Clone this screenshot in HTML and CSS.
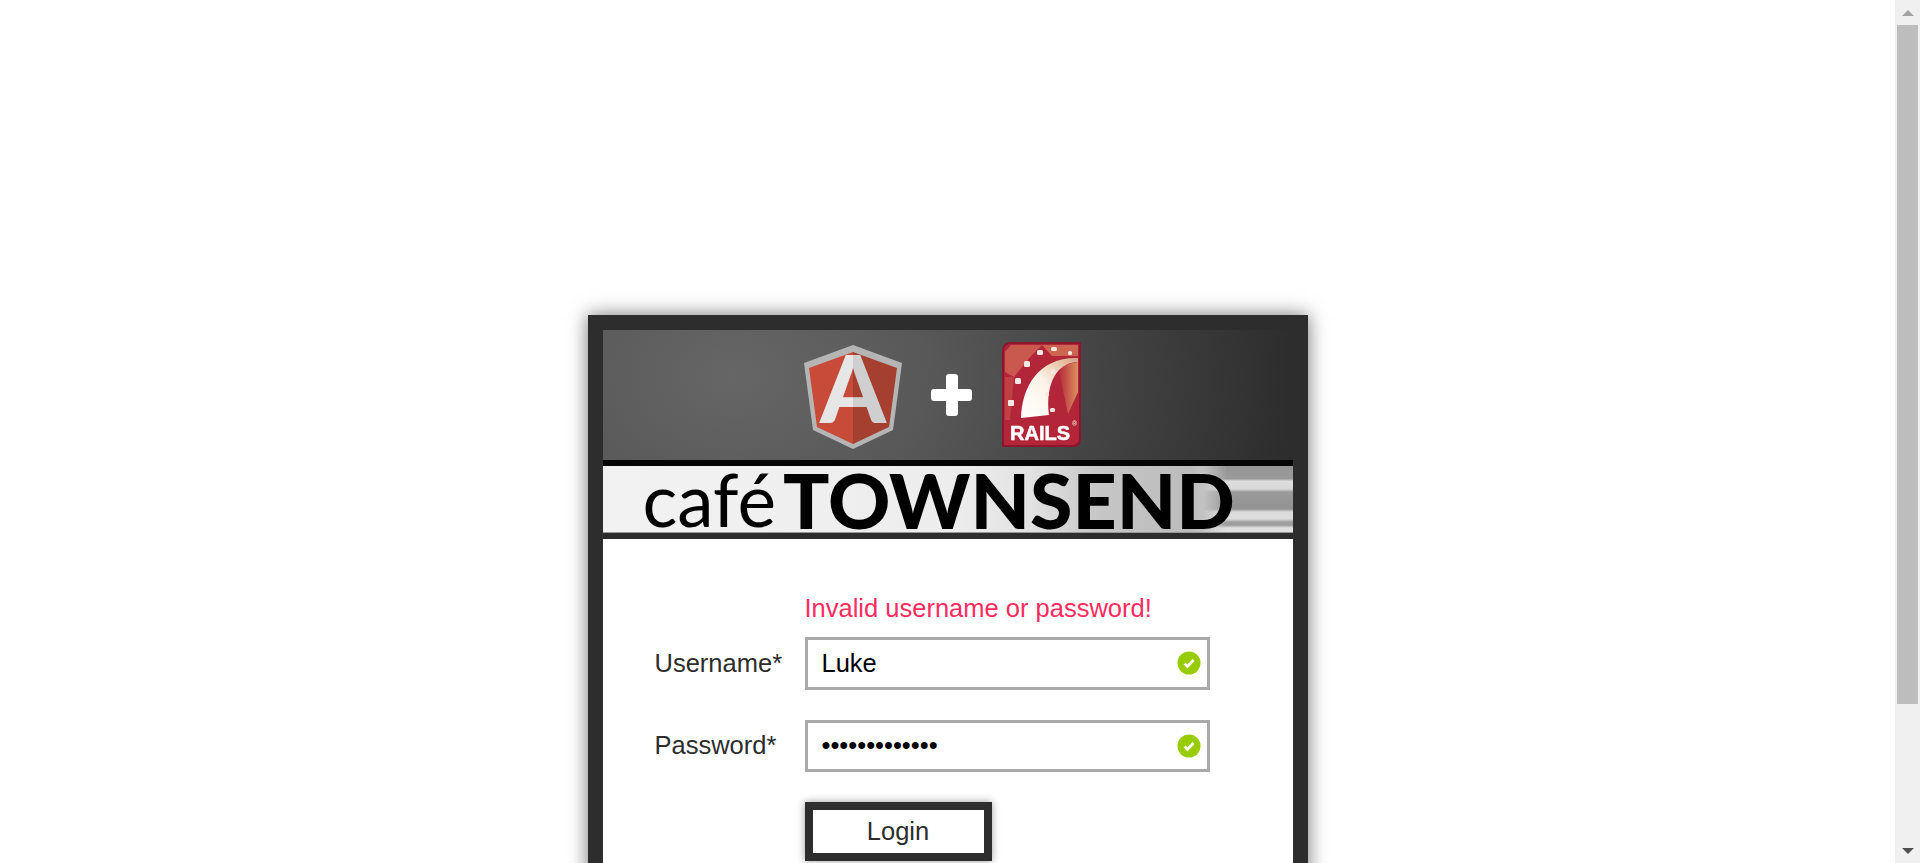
FILE: index.html
```html
<!DOCTYPE html>
<html lang="en">
<head>
<meta charset="utf-8">
<title>café Townsend</title>
<link rel="stylesheet" href="styles.css">
</head>
<body>
<div class="page">
  <main class="viewport">
    <section class="panel">
      <header class="hero">
        <div class="logos">
          <svg class="logo-angular" viewBox="0 0 98 104" aria-hidden="true">
            <defs>
              <linearGradient id="aFill" x1="0" x2="1" y1="0" y2="0">
                <stop offset="0.5" stop-color="#e6e6e6"/><stop offset="0.5" stop-color="#cfcfcf"/>
              </linearGradient>
            </defs>
            <polygon points="49,0 98,18 89,85 49,104 9,85 0,18" fill="#b5b5b5"/>
            <polygon points="49,7 49,99 13,82 5,23" fill="#c84a38"/>
            <polygon points="49,7 93,23 85,82 49,99" fill="#a53f30"/>
            <text class="angular-a" x="49" y="78" text-anchor="middle" fill="url(#aFill)">A</text>
          </svg>
          <svg class="logo-plus" viewBox="0 0 41 42" aria-hidden="true">
            <rect x="0" y="15" width="41" height="12" rx="3" fill="#fff"/>
            <rect x="15" y="0" width="12" height="42" rx="3" fill="#fff"/>
          </svg>
          <svg class="logo-rails" viewBox="0 0 79 105" aria-hidden="true">
            <defs>
              <linearGradient id="arc" x1="0" x2="1" y1="1" y2="0">
                <stop offset="0" stop-color="#fff"/><stop offset="0.5" stop-color="#fdf3e8"/><stop offset="0.85" stop-color="#e7bd9c"/><stop offset="1" stop-color="#cfa58c"/>
              </linearGradient>
              <linearGradient id="wedge" x1="0" x2="1" y1="0" y2="0">
                <stop offset="0" stop-color="#b3263a"/><stop offset="1" stop-color="#dc8f5e"/>
              </linearGradient>
            </defs>
            <path d="M9 0H79V97Q79 105 71 105H0V9Q0 0 9 0Z" fill="#8f1631"/>
            <path d="M9 2H77V96Q77 103 70 103H2V10Q2 2 9 2Z" fill="#b3263a"/>
            <polygon points="9,3 40,3 28,15 12,35 3,30 3,10" fill="#c9584e"/>
            <polygon points="40,3 76,3 76,14 50,14" fill="#cc654f"/>
            <polygon points="3,35 12,35 8,78 3,78" fill="#bf4044"/>
            <polygon points="56,24 76,20 76,50 66,72" fill="url(#wedge)"/>
            <path d="M19 76C20 44 37 15 76 16L76 20C56 20 43 40 47 73Z" fill="url(#arc)"/>
            <g fill="#f8e8e2">
              <rect x="35" y="8" width="6" height="5" rx="1.5"/><rect x="49" y="5" width="6" height="4" rx="1.5"/><rect x="66" y="9" width="4" height="4" rx="1.5"/>
              <rect x="22" y="19" width="6" height="6" rx="1.5"/><rect x="13" y="36" width="6" height="6" rx="1.5"/><rect x="6" y="58" width="6" height="6" rx="1"/>
              <rect x="49" y="27" width="4" height="5" rx="1.5"/><rect x="45" y="37" width="4" height="5" rx="1.5"/><rect x="43" y="50" width="4" height="4" rx="1.5"/><rect x="48" y="66" width="5" height="4" rx="1.5"/>
            </g>
            <text class="rails-word" x="38" y="98" text-anchor="middle" textLength="60" lengthAdjust="spacingAndGlyphs">RAILS</text>
            <text class="rails-mark" x="70" y="84">®</text>
          </svg>
        </div>
        <div class="rule"></div>
        <div class="wordmark">
          <span class="cafe">café</span><span class="townsend">TOWNSEND</span>
        </div>
      </header>
      <form class="login">
        <p class="error">Invalid username or password!</p>
        <label class="label" for="user">Username*</label>
        <div class="field">
          <input id="user" class="input" type="text" value="Luke">
          <svg class="ok" viewBox="0 0 24 24" aria-hidden="true"><circle cx="12" cy="12" r="11.5" fill="#9c0"/><path d="M7.5 12.5l3 3 6-6.5" fill="none" stroke="#fff" stroke-width="2.6"/></svg>
        </div>
        <label class="label" for="pass">Password*</label>
        <div class="field">
          <input id="pass" class="input" type="password" value="Skywalker1234">
          <svg class="ok" viewBox="0 0 24 24" aria-hidden="true"><circle cx="12" cy="12" r="11.5" fill="#9c0"/><path d="M7.5 12.5l3 3 6-6.5" fill="none" stroke="#fff" stroke-width="2.6"/></svg>
        </div>
        <div class="actions"><button class="submit" type="button">Login</button></div>
      </form>
    </section>
  </main>
  <aside class="scrollbar" aria-hidden="true">
    <div class="arrow arrow-up"></div>
    <div class="track"><div class="thumb"></div></div>
    <div class="arrow arrow-down"></div>
  </aside>
</div>
</body>
</html>
```
FILE: styles.css
```css
* { box-sizing: border-box; }
html, body { margin: 0; height: 100%; overflow: hidden; background: #fff; }
body { font-family: "Liberation Sans", Arial, sans-serif; color: #2d2d2d; }

.page { display: flex; height: 863px; }
.viewport { flex: 1; min-width: 0; overflow: hidden; }
.panel {
  width: 720px;
  margin: 315px auto 0;
  border: 15px solid #2d2d2d;
  background: #2d2d2d;
  box-shadow: 0 0 18px rgba(0, 0, 0, .55);
}

.hero { display: flex; flex-direction: column; }
.logos {
  height: 130px;
  display: flex;
  align-items: flex-start;
  padding-left: 201px;
  background: radial-gradient(ellipse 560px 420px at 130px 45px, #666 0%, #585858 35%, #3e3e3e 75%, #2d2d2d 100%);
}
.logos svg { overflow: visible; filter: blur(.5px); }
.logo-angular { width: 98px; height: 104px; margin-top: 15px; }
.logo-plus { width: 41px; height: 42px; margin: 44px 0 0 29px; }
.logo-rails { width: 79px; height: 105px; margin: 12px 0 0 30px; }
.angular-a { font: 900 94px Lato, "Liberation Sans", sans-serif; }
.rails-word { font: 700 20px "Liberation Sans", Arial, sans-serif; fill: #fff; stroke: #fff; stroke-width: .5px; }
.rails-mark { font: 700 7px "Liberation Sans", Arial, sans-serif; fill: #f3d9cf; }

.rule { height: 6px; background: #050505; }
.wordmark {
  position: relative;
  height: 67px;
  display: flex;
  align-items: center;
  padding-left: 40px;
  color: #000;
  font-family: Lato, "Liberation Sans", sans-serif;
  line-height: 67px;
  border-bottom: 1px solid #9a9a9a;
  background: linear-gradient(90deg, #f2f2f2 0, #ededed 50%, #e2e2e2 62%, #c6c6c6 72%, #bcbcbc 85%, #d2d2d2 92%, #dcdcdc 100%);
}
.wordmark::after {
  content: "";
  position: absolute;
  top: 0;
  right: 0;
  bottom: 0;
  width: 90px;
  background: linear-gradient(180deg, #949494 0, #9a9a9a 13px, #dedede 15px, #d8d8d8 23px, #999 26px, #939393 43px, #dcdcdc 46px, #dcdcdc 53px, #a0a0a0 56px, #9d9d9d 59px, #e0e0e0 62px);
  -webkit-mask-image: linear-gradient(90deg, transparent 0, #000 24px);
  mask-image: linear-gradient(90deg, transparent 0, #000 24px);
}
.cafe, .townsend { position: relative; z-index: 1; filter: blur(.4px); }
.cafe { font-size: 73px; font-weight: 400; }
.townsend { font-size: 77px; font-weight: 900; margin-left: 7px; }

.login {
  display: grid;
  grid-template-columns: 150px 405px;
  align-items: center;
  row-gap: 30px;
  margin-top: 6px;
  padding: 53px 0 50px 52px;
  background: #fff;
  font-size: 25.5px;
}
.error { grid-column: 2; margin: 0 0 -17px; color: #ff2d5f; line-height: 32px; white-space: nowrap; }
.label { color: #2d2d2d; }
.field { position: relative; height: 52.5px; }
.input {
  display: block;
  width: 100%;
  height: 100%;
  padding: 0 40px 0 14px;
  border: 3px solid #a9a9a9;
  background: #fff;
  color: #000;
  font: 25.5px "Liberation Sans", Arial, sans-serif;
  outline: 0;
}
.ok { position: absolute; top: 14px; right: 9px; width: 24px; height: 24px; }
.actions { grid-column: 2; }
.submit {
  display: block;
  width: 187px;
  height: 59px;
  padding: 0;
  border: 8px solid #2d2d2d;
  background: #fff;
  color: #2d2d2d;
  font: 25.5px "Liberation Sans", Arial, sans-serif;
  box-shadow: 0 0 8px rgba(0, 0, 0, .4);
}

.scrollbar { flex: none; width: 25px; display: flex; flex-direction: column; background: #f0f0f0; }
.arrow { height: 25px; flex: none; display: flex; align-items: center; justify-content: center; }
.arrow::before { content: ""; width: 0; height: 0; border-left: 6px solid transparent; border-right: 6px solid transparent; }
.arrow-up::before { border-bottom: 6px solid #a3a3a3; }
.arrow-down::before { border-top: 6px solid #505050; }
.track { flex: 1; padding: 0 2px; }
.thumb { height: 679px; background: #bdbdbd; }
```
